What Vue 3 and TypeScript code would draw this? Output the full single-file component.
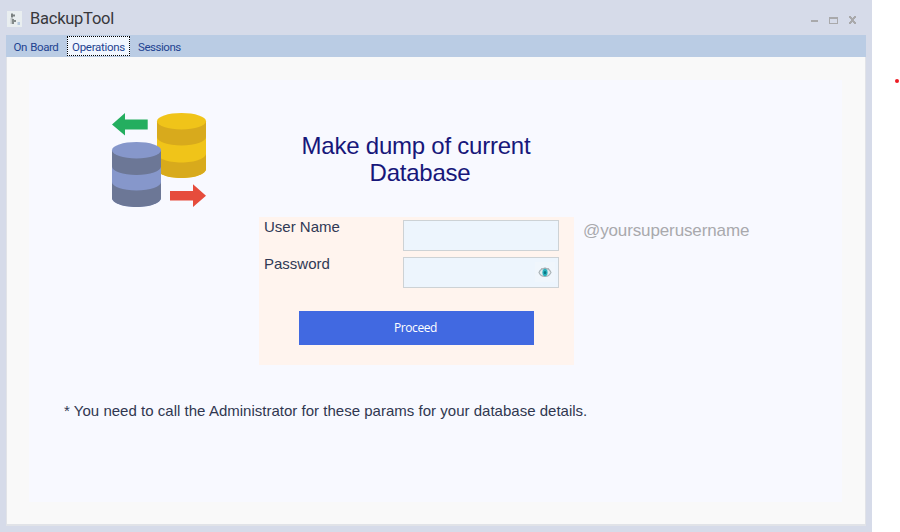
<script setup lang="ts">
import { ref } from 'vue'

const tabs = ['On Board', 'Operations', 'Sessions']
const active = ref('Operations')
const userName = ref('')
const password = ref('')
</script>

<template>
  <div class="screen">
    <main class="window">
      <header class="titlebar">
        <svg class="app-icon" width="15" height="16" viewBox="0 0 15 16">
          <rect width="15" height="16" fill="#e9eef0" />
          <path d="M4 2.500h2v1h2v2H6v1H4z" fill="#7b8181" />
          <path d="M3.500 7h2.500v6H3.500z" fill="#c3c9ca" />
          <path d="M5 8h2v1h2v2H7v2H5z" fill="#848a8a" />
          <rect x="10.500" y="11" width="2.500" height="3" fill="#b5c8dc" />
        </svg>
        <h1 class="app-name">BackupTool</h1>
        <svg class="controls" width="48" height="10" viewBox="0 0 48 10" fill="#a9a9ab">
          <rect x="0" y="5" width="7" height="2" />
          <path fill-rule="evenodd" d="M18 2h9v7h-9zM19 4v4h7V4z" />
          <path d="M38 1h2v1h1v1h1V2h1V1h2v2h-1v1h-1v2h1v1h1v2h-2V8h-1V7h-1v1h-1v1h-2V7h1V6h1V4h-1V3h-1z" />
        </svg>
      </header>

      <nav class="tabs">
        <button
          v-for="tab in tabs"
          :key="tab"
          class="tab"
          :class="{ active: tab === active }"
          @click="active = tab"
        ><span>{{ tab }}</span></button>
      </nav>

      <section class="page">
        <div class="panel">
          <div class="intro">
            <svg class="art" width="96" height="96" viewBox="0 0 96 96">
              <path d="M46 9v48c0 4.800 11 9 24.500 9S95 61.800 95 57V9z" fill="#f0c419" />
              <path d="M46 9v16c0 4.800 11 8.500 24.500 8.500S95 29.800 95 25V9zM46 41.500v15.500c0 4.800 11 9 24.500 9S95 61.800 95 57V41.500c0 4.800-11 9-24.500 9S46 46.300 46 41.500z" fill="#d8aa1c" />
              <ellipse cx="70.500" cy="9.200" rx="24.500" ry="8.200" fill="#f0c419" />
              <path d="M1 38v48c0 4.800 11 9 24.500 9S50 90.800 50 86V38z" fill="#8697cb" />
              <path d="M1 38v16.500c0 4.800 11 8.500 24.500 8.500S50 59.300 50 54.500V38zM1 70v16c0 4.800 11 9 24.500 9S50 90.800 50 86V70c0 4.800-11 8.500-24.500 8.500S1 74.800 1 70z" fill="#6c7796" />
              <ellipse cx="25.500" cy="38.200" rx="24.500" ry="8.200" fill="#8697cb" />
              <path d="M1 12.500L14 1v6.500h22.700v10H14v6z" fill="#24ae5f" />
              <path d="M95 83.700L82 72.300V79H59v9.500h23v6.500z" fill="#e64c3c" />
            </svg>
            <h2 class="heading"><span>Make dump of current</span><br><span class="second">Database</span></h2>
          </div>

          <div class="form-row">
            <form class="form" @submit.prevent>
              <label class="field">
                <span class="label user">User Name</span>
                <input v-model="userName" class="input" type="text">
              </label>
              <label class="field">
                <span class="label">Password</span>
                <span class="password">
                  <input v-model="password" class="input" type="password">
                  <svg class="eye" width="20" height="20" viewBox="0 0 20 20">
                    <rect width="20" height="20" fill="#f0f6fc" />
                    <path d="M4 10.500c2-5 9.500-6 12 0-2.500 5.500-10 5-12 0z" fill="#e5edf0" stroke="#a9b3b7" stroke-width="1.100" />
                    <ellipse cx="10" cy="10.500" rx="2.600" ry="3.700" fill="#2ab1bd" />
                    <ellipse cx="10" cy="10.600" rx="1.300" ry="1.700" fill="#087582" />
                    <path d="M6.500 6.500l.7.700M13.500 6.500l-.7.700M10 5.500v1" stroke="#929ea4" />
                  </svg>
                </span>
              </label>
              <button class="proceed" type="submit">Proceed</button>
            </form>
            <span class="hint">@yoursuperusername</span>
          </div>

          <p class="note">* You need to call the Administrator for these params for your database details.</p>
        </div>
      </section>
    </main>
    <aside class="margin"><span class="dot"></span></aside>
  </div>
</template>

<style>
body { margin: 0; background: #fff; }
</style>

<style scoped>
* { box-sizing: border-box; }
.screen {
  display: flex;
  width: 900px;
  height: 532px;
  overflow: hidden;
  font-family: "Liberation Sans", sans-serif;
}
.window {
  display: flex;
  flex-direction: column;
  width: 872px;
  padding: 0 6px 6px;
  background: #d6dbe9;
}
.titlebar {
  display: flex;
  height: 35px;
  padding: 11px 7px 0 1px;
  align-items: flex-start;
}
.app-icon { display: block; flex: none; }
.app-name {
  margin: -2px 0 0 8px;
  font: 400 16.500px/19px Roboto, sans-serif;
  letter-spacing: -0.250px;
  color: #38383c;
}
.controls { margin: 4px 0 0 auto; }
.tabs {
  display: flex;
  height: 22px;
  padding-top: 1px;
  background: #bacce4;
}
.tab {
  height: 21px;
  padding: 0 8px 0 7px;
  border: 0;
  background: transparent;
  font: 400 11.500px/22px Roboto, sans-serif;
  letter-spacing: -0.450px;
  word-spacing: 1px;
  color: #1e4391;
  white-space: nowrap;
}
.tab:first-child { width: 61px; }
.tab:last-child { padding-left: 8px; }
.tab.active {
  width: 63px;
  height: 20px;
  padding: 0;
  border: 1px dotted #000;
  background: #f0f6fe;
  line-height: 20px;
  letter-spacing: -0.300px;
}
.page {
  flex: 1;
  padding: 23px 23px 21px 22px;
  border: solid #e1e3e8;
  border-width: 0 1px 2px;
  background: #f9f9f9;
}
.panel {
  height: 422px;
  padding: 32px 0 0 35px;
  background: #f8f9ff;
}
.intro { display: flex; height: 105px; padding-left: 47px; }
.art { display: block; flex: none; }
.heading {
  width: 240px;
  margin: 20px 0 0 89px;
  text-align: center;
  font: 400 24px/27px "Liberation Sans", sans-serif;
  letter-spacing: -0.230px;
  color: #17177a;
  white-space: nowrap;
}
.second { padding-left: 8px; }
.form-row { display: flex; padding-left: 195px; }
.form {
  width: 315px;
  height: 148px;
  padding: 3px 15px 0 5px;
  background: #fff4ee;
}
.field { display: flex; justify-content: space-between; height: 37px; }
.label {
  margin-top: -2px;
  font-size: 15px;
  line-height: 18px;
  color: #303955;
}
.input {
  display: block;
  width: 156px;
  height: 31px;
  margin: 0;
  padding: 4px 8px;
  border: 1px solid #cdd2d5;
  border-radius: 0;
  background: #edf5fd;
  font: 15px "Liberation Sans", sans-serif;
}
.password { position: relative; }
.eye { position: absolute; top: 5px; right: 4px; }
.proceed {
  display: block;
  width: 235px;
  height: 34px;
  margin: 17px 0 0 35px;
  padding: 0 2px 0 0;
  border: 0;
  background: #4169e1;
  font: 400 12px/34px "Open Sans", sans-serif;
  letter-spacing: -0.400px;
  color: #fff;
}
.hint {
  margin: 4px 0 0 9px;
  font-size: 17px;
  line-height: 20px;
  letter-spacing: -0.120px;
  color: #a9a9ad;
}
.note {
  margin: 36px 0 0;
  font-size: 15px;
  line-height: 20px;
  word-spacing: 0.100px;
  color: #303750;
  white-space: nowrap;
}
.margin { display: flex; width: 28px; padding: 79px 0 0 23px; background: #fff; }
.dot { width: 4px; height: 4px; border-radius: 50%; background: #ed1c24; }
</style>
